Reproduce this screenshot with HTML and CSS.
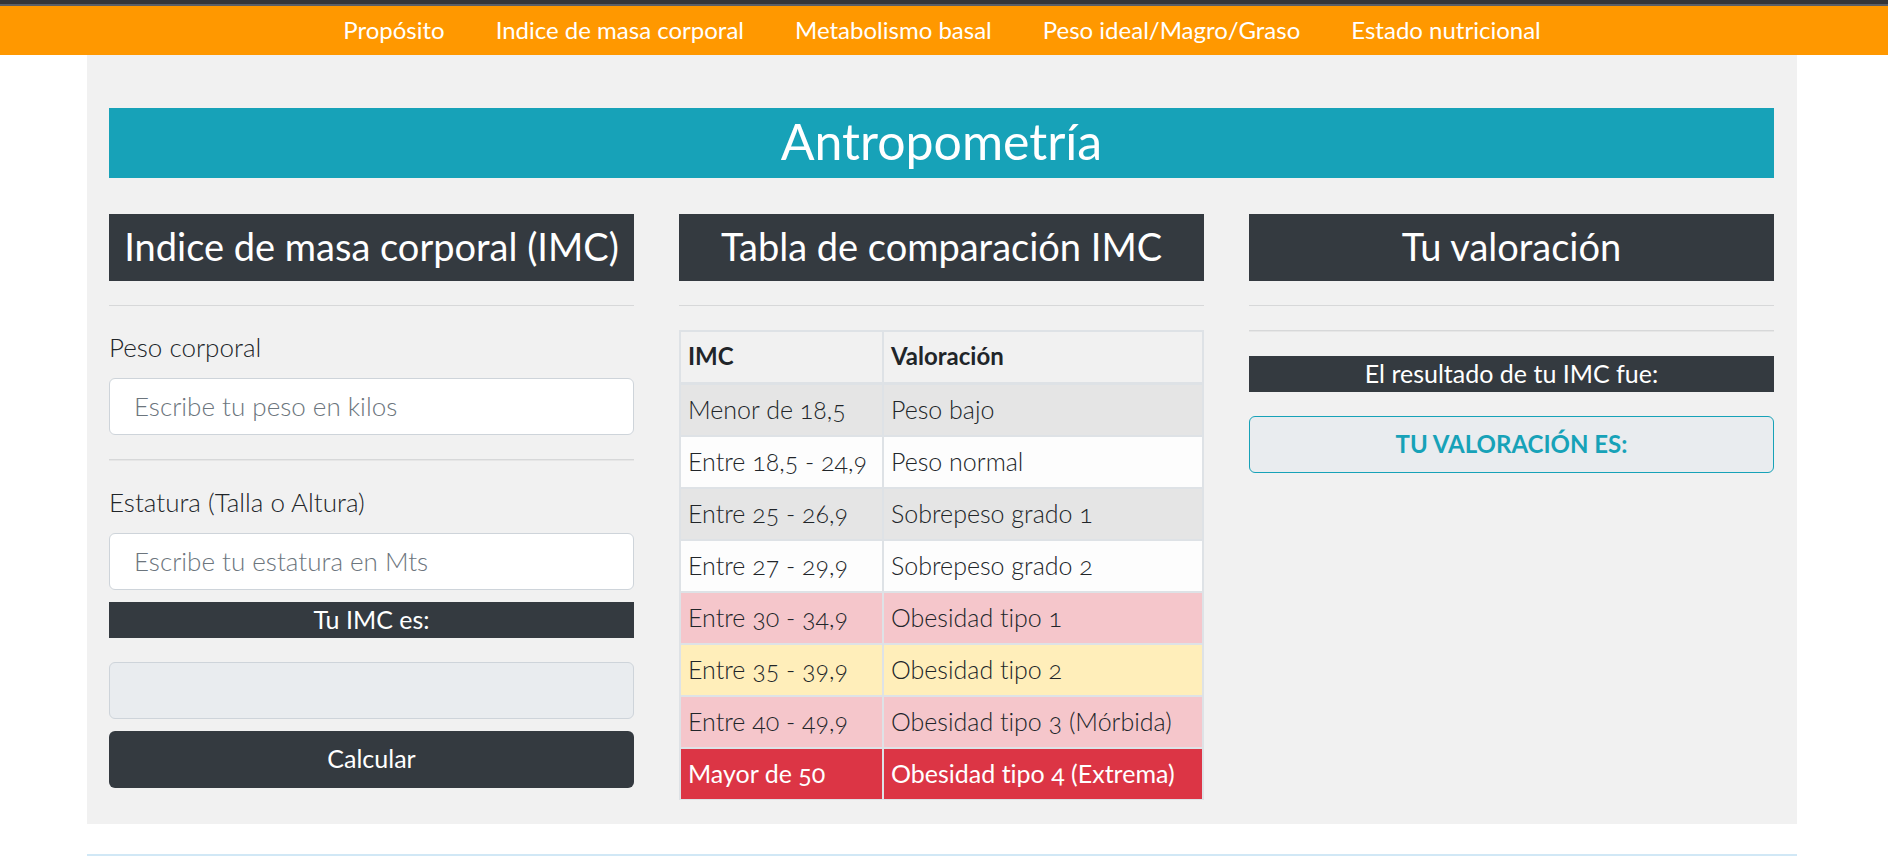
FILE: index.html
```html
<!DOCTYPE html>
<html lang="es">
<head>
<meta charset="utf-8">
<meta name="viewport" content="width=device-width, initial-scale=1">
<title>Antropometría</title>
<link rel="stylesheet" href="styles.css">
</head>
<body>
<header class="site-header">
  <nav class="nav">
    <a href="#proposito">Propósito</a>
    <a href="#imc">Indice de masa corporal</a>
    <a href="#metabolismo">Metabolismo basal</a>
    <a href="#peso-ideal">Peso ideal/Magro/Graso</a>
    <a href="#estado">Estado nutricional</a>
  </nav>
</header>
<main class="page">
  <div class="panel" id="imc">
    <h1 class="title">Antropometría</h1>
    <div class="columns">
      <section>
        <h2 class="heading">Indice de masa corporal (IMC)</h2>
        <hr class="rule">
        <form class="form">
          <label class="label" for="peso">Peso corporal</label>
          <input class="field" id="peso" type="text" placeholder="Escribe tu peso en kilos">
          <hr class="rule rule-soft">
          <label class="label" for="estatura">Estatura (Talla o Altura)</label>
          <input class="field" id="estatura" type="text" placeholder="Escribe tu estatura en Mts">
          <label class="bar" for="resultado">Tu IMC es:</label>
          <input class="field field-output" id="resultado" type="text" readonly>
          <button class="button" type="button">Calcular</button>
        </form>
      </section>
      <section>
        <h2 class="heading">Tabla de comparación IMC</h2>
        <hr class="rule">
        <table class="table">
          <thead>
            <tr><th scope="col" class="range">IMC</th><th scope="col">Valoración</th></tr>
          </thead>
          <tbody>
            <tr class="gray"><td>Menor de 18,5</td><td>Peso bajo</td></tr>
            <tr class="light"><td>Entre 18,5 - 24,9</td><td>Peso normal</td></tr>
            <tr class="gray"><td>Entre 25 - 26,9</td><td>Sobrepeso grado 1</td></tr>
            <tr class="light"><td>Entre 27 - 29,9</td><td>Sobrepeso grado 2</td></tr>
            <tr class="pink"><td>Entre 30 - 34,9</td><td>Obesidad tipo 1</td></tr>
            <tr class="yellow"><td>Entre 35 - 39,9</td><td>Obesidad tipo 2</td></tr>
            <tr class="pink"><td>Entre 40 - 49,9</td><td>Obesidad tipo 3 (Mórbida)</td></tr>
            <tr class="red"><td>Mayor de 50</td><td>Obesidad tipo 4 (Extrema)</td></tr>
          </tbody>
        </table>
      </section>
      <section>
        <h2 class="heading">Tu valoración</h2>
        <hr class="rule">
        <hr class="rule rule-soft">
        <label class="bar bar-result" for="valoracion">El resultado de tu IMC fue:</label>
        <input class="field field-output field-info" id="valoracion" type="text" value="TU VALORACIÓN ES:" readonly>
      </section>
    </div>
  </div>
  <div class="next-section"></div>
</main>
</body>
</html>
```
FILE: styles.css
```css
* { box-sizing: border-box; }
body {
  margin: 0;
  background: #fff;
  color: #212529;
  font: 300 26px/36px Lato, "Open Sans", sans-serif;
  font-variant-numeric: oldstyle-nums;
  font-variant-ligatures: none;
}
.site-header {
  background: #ff9800;
  border-top: 4px solid #343539;
}
.nav {
  display: flex;
  flex-wrap: wrap;
  justify-content: center;
  gap: 0 51px;
  padding: 5px 4px 6px 0;
  border-top: 2px solid #5c5f66;
  font-size: 24px;
  font-weight: 400;
}
.nav a { color: #fff; text-decoration: none; line-height: 38px; }
.page { padding-right: 4px; }
.panel {
  max-width: 1710px;
  margin: 0 auto;
  padding: 53px 23px 24px 22px;
  background: #f1f1f1;
}
.title, .heading { margin: 0; color: #fff; font-weight: 400; text-align: center; }
.title { padding: 4px 6px 8px; background: #17a2b8; font-size: 50px; line-height: 58px; }
.heading { padding: 11px 0 13px; background: #343a40; font-size: 38px; line-height: 43px; }
.columns {
  display: grid;
  grid-template-columns: repeat(3, minmax(0, 1fr));
  gap: 45px;
  margin-top: 36px;
}
.rule { margin: 24px 0; border: 0; border-top: 1px solid #d7d8d9; }
.rule-soft { border-bottom: 1px solid #e6e6e6; }
.label { display: block; margin-bottom: 14px; line-height: 34px; }
.field {
  display: block;
  width: 100%;
  height: 57px;
  padding: 8px 24px 10px;
  border: 1px solid #ced4da;
  border-radius: 6px;
  background: #fff;
  color: #495057;
  font: inherit;
}
.field::placeholder { color: #6c757d; opacity: 1; }
.field-output { background: #e9ecef; }
.field-info {
  border-color: #17a2b8;
  color: #17a2b8;
  font-size: 24px;
  font-weight: 700;
  text-align: center;
}
.bar {
  display: block;
  margin: 12px 0 24px;
  padding-bottom: 2px;
  background: #343a40;
  color: #fff;
  font-size: 25px;
  font-weight: 400;
  line-height: 34px;
  text-align: center;
}
.bar-result { margin-top: 24px; }
.button {
  display: block;
  width: 100%;
  height: 57px;
  margin: 12px 0;
  padding: 0 0 4px;
  border: 0;
  border-radius: 6px;
  background: #343a40;
  color: #fff;
  font: inherit;
  font-size: 25px;
  font-weight: 400;
}
.table { width: 100%; border-collapse: collapse; table-layout: fixed; font-size: 25px; }
.table th, .table td {
  padding: 6px 7px 8px;
  border: 2px solid #dee2e6;
  text-align: left;
}
.table td:first-child { white-space: nowrap; }
.table th { border-bottom-width: 3px; font-size: 24px; font-weight: 700; }
.table .range { width: 203px; }
.table .red td { border-bottom-width: 1px; font-weight: 400; }
.gray { background: #e5e5e5; }
.light { background: #fdfdfd; }
.pink { background: #f5c6cb; }
.yellow { background: #ffeeba; }
.red { background: #dc3545; color: #fff; }
.next-section {
  max-width: 1710px;
  height: 2px;
  margin: 30px auto 0;
  background: #d1e8f6;
}
```
